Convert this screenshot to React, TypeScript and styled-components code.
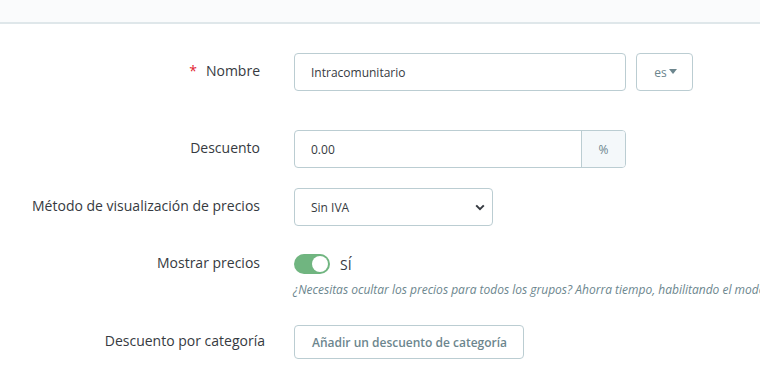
import styled, { createGlobalStyle } from 'styled-components';

const GlobalStyle = createGlobalStyle`
  body {
    margin: 0;
    overflow: hidden;
    background: #fff;
    font-family: 'Open Sans', 'Liberation Sans', sans-serif;
    color: #363a41;
  }
`;

const TopBar = styled.div`
  height: 22px;
  background: #fafbfc;
  border-bottom: 2px solid #dfe7ea;
`;

const Form = styled.form`
  display: flex;
  flex-direction: column;
  padding-top: 29px;
`;

const Row = styled.div<{ $labelWidth?: number; $gap?: number; $mt?: number }>`
  display: grid;
  grid-template-columns: ${(p) => p.$labelWidth ?? 260}px 1fr;
  column-gap: ${(p) => p.$gap ?? 34}px;
  align-items: start;
  margin-top: ${(p) => p.$mt ?? 0}px;
`;

const Label = styled.label<{ $h?: number }>`
  min-height: ${(p) => p.$h ?? 38}px;
  padding-bottom: 4px;
  box-sizing: border-box;
  display: flex;
  align-items: center;
  justify-content: flex-end;
  font-size: 14px;
  white-space: nowrap;
`;

const Required = styled.span`
  color: #e2222f;
  margin-right: 9px;
  font-size: 14px;
`;

const Controls = styled.div`
  display: flex;
  align-items: center;
  gap: 10px;
`;

const TextInput = styled.div<{ $w: number }>`
  width: ${(p) => p.$w}px;
  height: 38px;
  box-sizing: border-box;
  border: 1px solid #bbcdd2;
  border-radius: 4px;
  display: flex;
  align-items: center;
  font-size: 12px;
  overflow: hidden;
`;

const Value = styled.span`
  flex: 1;
  padding-left: 16px;
`;

const Addon = styled.span`
  width: 43px;
  align-self: stretch;
  display: flex;
  align-items: center;
  justify-content: center;
  background: #f4f8fa;
  border-left: 1px solid #bbcdd2;
  color: #6c868e;
  font-size: 12px;
`;

const LangButton = styled.button`
  width: 57px;
  height: 38px;
  box-sizing: border-box;
  border: 1px solid #bbcdd2;
  border-radius: 4px;
  background: #fff;
  color: #6c868e;
  font-family: inherit;
  font-size: 12px;
  display: flex;
  align-items: center;
  justify-content: center;
  gap: 2px;
  padding: 0 0 0 2px;
`;

const Caret = styled.span`
  width: 0;
  height: 0;
  border-left: 4.5px solid transparent;
  border-right: 4.5px solid transparent;
  border-top: 5px solid #6c868e;
  margin-top: -2px;
`;

const Chevron = styled.svg`
  margin-right: 7px;
`;

const Toggle = styled.div`
  height: 38px;
  display: flex;
  align-items: center;
  gap: 10px;
  font-size: 14px;
`;

const Track = styled.span<{ $on: boolean }>`
  width: 36px;
  height: 20px;
  border-radius: 10px;
  background: ${(p) => (p.$on ? '#70b580' : '#bbcdd2')};
  display: flex;
  align-items: center;
  justify-content: ${(p) => (p.$on ? 'flex-end' : 'flex-start')};
  padding: 0 2px;
  box-sizing: border-box;
`;

const Knob = styled.span`
  width: 16px;
  height: 16px;
  border-radius: 50%;
  background: #fff;
`;

const Help = styled.p`
  margin: -2px 0 0 -1px;
  font-size: 12px;
  font-style: italic;
  color: #6c868e;
  white-space: nowrap;
`;

const ActionButton = styled.button`
  height: 34px;
  box-sizing: border-box;
  padding: 0 16px 0 17px;
  border: 1px solid #bbcdd2;
  border-radius: 4px;
  background: #fff;
  color: #6c868e;
  font-family: inherit;
  font-size: 12px;
  font-weight: 600;
`;

const App = () => {
  return (
    <>
      <GlobalStyle />
      <TopBar />
      <Form>
        <Row>
          <Label>
            <Required>*</Required>Nombre
          </Label>
          <Controls>
            <TextInput $w={332}>
              <Value>Intracomunitario</Value>
            </TextInput>
            <LangButton type='button'>
              es
              <Caret />
            </LangButton>
          </Controls>
        </Row>

        <Row $mt={39}>
          <Label>Descuento</Label>
          <TextInput $w={332}>
            <Value>0.00</Value>
            <Addon>%</Addon>
          </TextInput>
        </Row>

        <Row $mt={20}>
          <Label>Método de visualización de precios</Label>
          <TextInput $w={199}>
            <Value>Sin IVA</Value>
            <Chevron width='10' height='7' viewBox='0 0 10 7'>
              <path d='M1.2 1.4 L5 5.2 L8.8 1.4' fill='none' stroke='#363a41' strokeWidth='2' />
            </Chevron>
          </TextInput>
        </Row>

        <Row $mt={19}>
          <Label>Mostrar precios</Label>
          <div>
            <Toggle>
              <Track $on>
                <Knob />
              </Track>
              SÍ
            </Toggle>
            <Help>
              ¿Necesitas ocultar los precios para todos los grupos? Ahorra tiempo, habilitando el modo catálogo en la
              página de Preferencias de productos.
            </Help>
          </div>
        </Row>

        <Row $mt={27} $labelWidth={265} $gap={29}>
          <Label $h={34}>Descuento por categoría</Label>
          <div>
            <ActionButton type='button'>Añadir un descuento de categoría</ActionButton>
          </div>
        </Row>
      </Form>
    </>
  );
};

export default App;
